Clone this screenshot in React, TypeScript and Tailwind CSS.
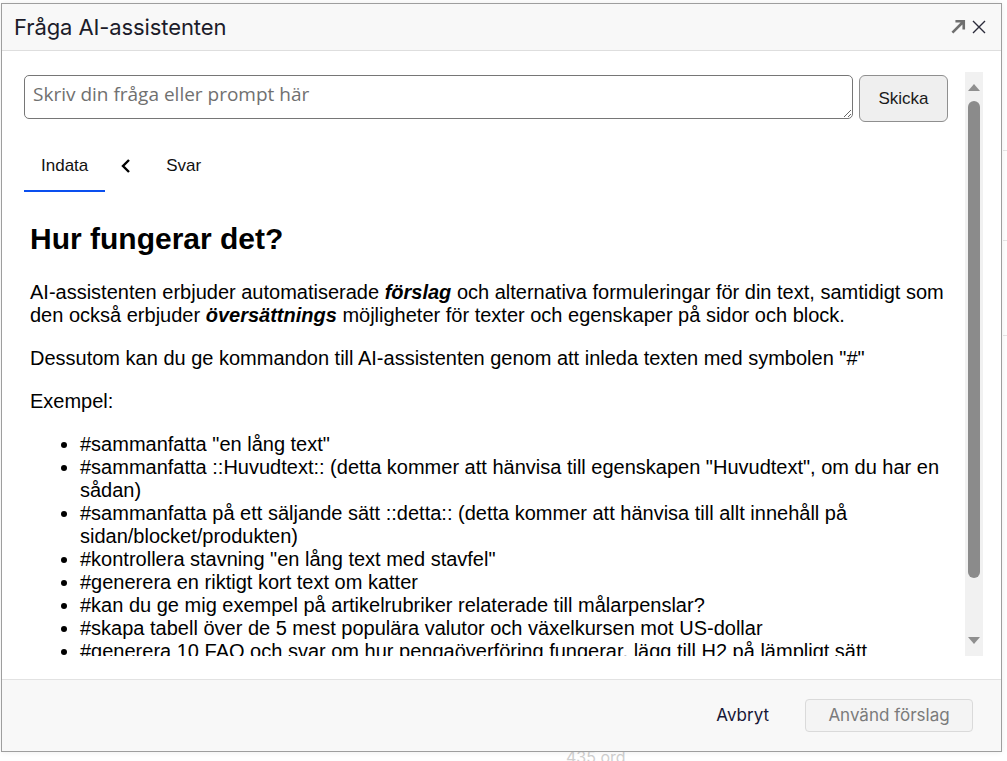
import React from "react";

const items: React.ReactNode[] = [
  '#sammanfatta "en lång text"',
  '#sammanfatta ::Huvudtext:: (detta kommer att hänvisa till egenskapen "Huvudtext", om du har en sådan)',
  "#sammanfatta på ett säljande sätt ::detta:: (detta kommer att hänvisa till allt innehåll på sidan/blocket/produkten)",
  '#kontrollera stavning "en lång text med stavfel"',
  "#generera en riktigt kort text om katter",
  "#kan du ge mig exempel på artikelrubriker relaterade till målarpenslar?",
  "#skapa tabell över de 5 mest populära valutor och växelkursen mot US-dollar",
  "#generera 10 FAQ och svar om hur pengaöverföring fungerar, lägg till H2 på lämpligt sätt",
  "#översätt till engelska ::Huvudtext::",
];

export default function App() {
  return (
    <div className="relative w-[1007px] h-[761px] bg-white overflow-hidden">
      {/* faint page content behind the dialog */}
      <div className="absolute left-[566px] top-[745px] text-[16px] text-[#cfcfcf] font-['Inter',sans-serif]">
        435 ord
      </div>
      <div className="absolute left-[1003px] top-[150px] w-[4px] h-[1px] bg-[#e6e6e6]" />
      <div className="absolute left-[1003px] top-[240px] w-[4px] h-[1px] bg-[#e6e6e6]" />
      <div className="absolute left-[1003px] top-[335px] w-[4px] h-[1px] bg-[#e6e6e6]" />

      <div className="relative ml-[1px] pt-[3px]">
        <div className="w-[1001px] h-[749px] border border-[#9e9e9e] bg-white flex flex-col shadow-[0_0_6px_rgba(0,0,0,0.08)]">
          {/* header */}
          <div className="h-[47px] shrink-0 bg-[#f8f8f8] border-b border-[#dedede] flex items-center pl-[12px] pr-[14px]">
            <div className="flex-1 text-[22px] leading-none text-[#1c1c2a] font-['Inter',sans-serif] tracking-[-0.1px]">
              Fråga AI-assistenten
            </div>
            <svg width="21" height="21" viewBox="0 0 24 24" className="mr-[2px] mt-[-2px]">
              <path d="M8.5 4.5v3h5.9L4 17.9 6.1 20 16.5 9.6v5.9h3v-11z" fill="#6f6f6f" />
            </svg>
            <svg width="16" height="16" viewBox="0 0 16 16">
              <path d="M2 2L14 14M14 2L2 14" stroke="#2b2b3a" strokeWidth="1.4" />
            </svg>
          </div>

          {/* body */}
          <div className="h-[628px] shrink-0 pt-[21px] pb-[23px] pl-[22px] pr-[18px] flex">
            <div className="flex-1 min-w-0 overflow-hidden pt-[3px]">
              <div className="flex items-start gap-[6px] pr-[17px]">
                <textarea
                  placeholder="Skriv din fråga eller prompt här"
                  className="flex-1 h-[44px] border border-[#767676] rounded-[5px] px-[8px] pt-[5px] text-[19px] leading-[26px] text-[#222] placeholder:text-[#707070] font-['Open_Sans',sans-serif] outline-none"
                />
                <button className="w-[89px] h-[47px] bg-[#efefef] border border-[#8f8f8f] rounded-[6px] text-[17px] text-[#1a1a1a] font-['Liberation_Sans',Arial,sans-serif]">
                  Skicka
                </button>
              </div>

              <div className="mt-[20px] flex items-stretch h-[50px] font-['Liberation_Sans',Arial,sans-serif] text-[17px]">
                <div className="px-[17px] flex items-center border-b-2 border-[#0a4fef] text-[#111]">Indata</div>
                <div className="w-[44px] flex items-center justify-center pb-[2px]">
                  <svg width="14" height="16" viewBox="0 0 14 16" className="ml-[-2px]">
                    <path d="M10 2L4 8l6 6" stroke="#000" strokeWidth="2.4" fill="none" />
                  </svg>
                </div>
                <div className="px-[17px] flex items-center pb-[2px] text-[#111]">Svar</div>
              </div>

              <div className="px-[6px] font-['Liberation_Sans',Arial,sans-serif] text-black">
                <h2 className="mt-[30px] mb-[25px] text-[30px] font-bold leading-[34px]">Hur fungerar det?</h2>
                <p className="text-[20px] leading-[23px] mb-[20px]">
                  AI-assistenten erbjuder automatiserade <b><i>förslag</i></b> och alternativa formuleringar för din text, samtidigt som den också erbjuder <b><i>översättnings</i></b> möjligheter för texter och egenskaper på sidor och block.
                </p>
                <p className="text-[20px] leading-[23px] mb-[20px]">
                  Dessutom kan du ge kommandon till AI-assistenten genom att inleda texten med symbolen "#"
                </p>
                <p className="text-[20px] leading-[23px] mb-[20px]">Exempel:</p>
                <ul className="list-disc pl-[50px] text-[20px] leading-[23px]">
                  {items.map((t, i) => (
                    <li key={i}>{t}</li>
                  ))}
                </ul>
              </div>
            </div>

            {/* scrollbar */}
            <div className="w-[18px] shrink-0 bg-[#f1f1f1] flex flex-col items-center">
              <div className="mt-[12px] w-0 h-0 border-x-[6px] border-x-transparent border-b-[7px] border-b-[#8f8f8f]" />
              <div className="mt-[10px] w-[12px] h-[477px] rounded-full bg-[#8b8b8b]" />
              <div className="flex-1" />
              <div className="mb-[12px] w-0 h-0 border-x-[6px] border-x-transparent border-t-[7px] border-t-[#8f8f8f]" />
            </div>
          </div>

          {/* footer */}
          <div className="flex-1 bg-[#f8f8f8] border-t border-[#e2e2e2] flex items-center justify-end pr-[28px] gap-[36px] font-['Inter',sans-serif] text-[17px]">
            <span className="text-[#161636]">Avbryt</span>
            <button className="w-[168px] h-[33px] rounded-[4px] border border-[#dadada] bg-[#f4f4f4] text-[#7b7b7b]">
              Använd förslag
            </button>
          </div>
        </div>
      </div>
    </div>
  );
}
